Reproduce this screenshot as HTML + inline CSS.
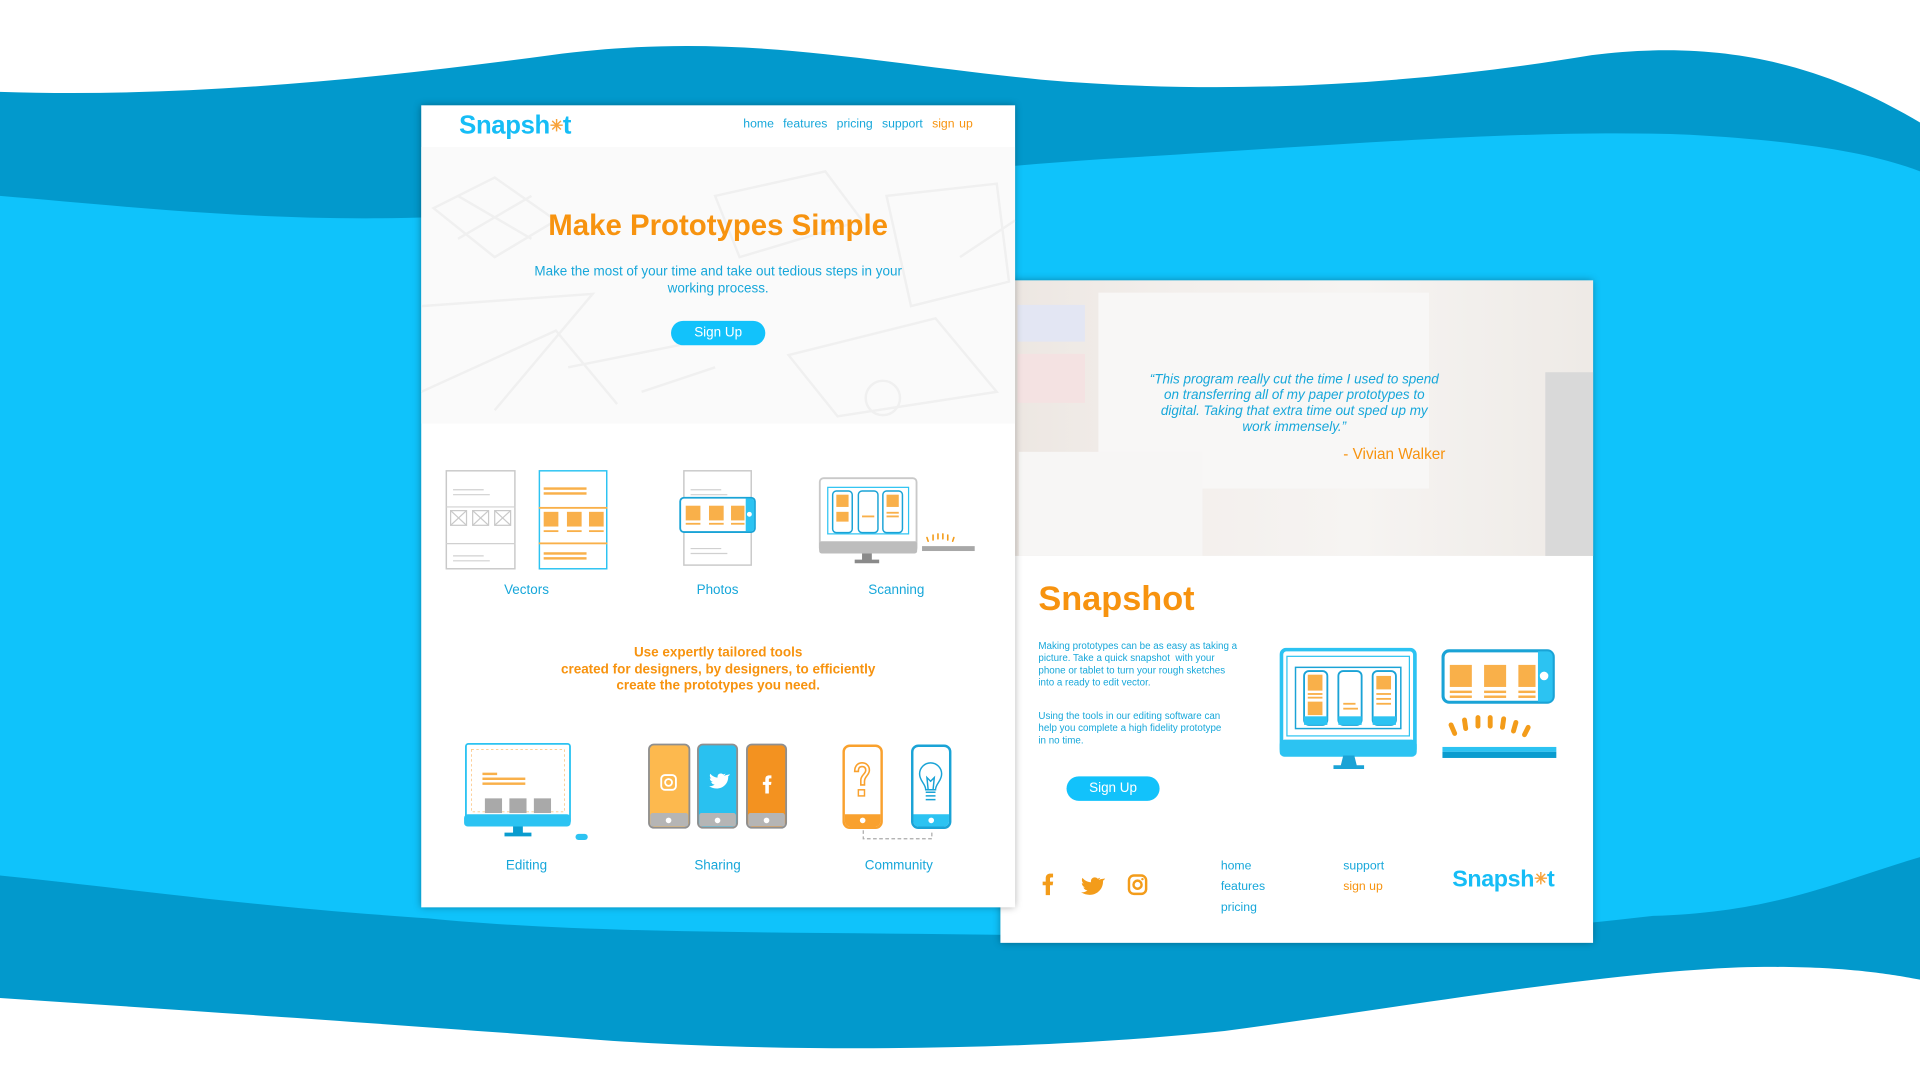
<!DOCTYPE html>
<html><head><meta charset="utf-8"><style>
*{margin:0;padding:0;box-sizing:border-box}
html,body{width:1920px;height:1080px;overflow:hidden;background:#fff}
#s{position:absolute;left:0;top:0;width:1568px;height:882px;transform:scale(1.22449);transform-origin:0 0;font-family:"Liberation Sans",sans-serif}
.a{position:absolute}
.pg{position:absolute;background:#fff;box-shadow:0 0 6px rgba(0,0,0,.35)}
.bl{color:#17a7da}.or{color:#f7930f}
.btn{position:absolute;background:#12c2fb;color:#fff;border-radius:10px;font-size:11px;text-align:center;line-height:20px}
.c{text-align:center}
.logo{position:absolute;font-weight:bold;color:#16bdf6;font-size:21px;letter-spacing:-.3px}
.logo i{font-style:normal;color:#f7a23a;font-size:13px;vertical-align:2px}
.nav{position:absolute;font-size:10px}
</style></head><body><div id="s">
<svg class="a" style="left:0;top:0" width="1568" height="882" viewBox="0 0 1568 882">
<path d="M0 75 C150 80 300 65 450 45 C600 25 700 50 850 65 C1000 78 1150 70 1300 45 C1420 30 1500 60 1568 100 L1568 882 L0 882Z" fill="#0299cc"/>
<path d="M0 160 C120 170 250 185 400 175 C600 160 750 140 900 130 C1100 118 1250 105 1380 110 C1470 115 1530 125 1568 140 L1568 700 C1500 720 1450 745 1350 748 C1200 765 1100 772 900 765 C700 760 500 765 350 750 C200 740 100 725 0 715Z" fill="#0fc3fb"/>
<path d="M0 815 C150 825 300 835 500 850 C650 860 850 858 1000 842 C1150 822 1300 795 1420 790 C1500 788 1540 795 1568 800 L1568 882 L0 882Z" fill="#fff"/>
</svg>

<!-- right page -->
<div class="pg" style="left:817px;top:229px;width:484px;height:541px">
 <div class="a" style="left:0;top:0;width:484px;height:225px;background:linear-gradient(90deg,#ece6e1,#f3efec 30%,#f6f4f2 60%,#eeeae6)"></div>
 <div class="a" style="left:14px;top:20px;width:55px;height:30px;background:#e3e6f3"></div>
 <div class="a" style="left:14px;top:60px;width:55px;height:40px;background:#f4e2e2"></div>
 <div class="a" style="left:80px;top:10px;width:270px;height:160px;background:#f8f7f6"></div>
 <div class="a" style="left:445px;top:75px;width:39px;height:150px;background:#d9d9d9"></div>
 <div class="a" style="left:15px;top:140px;width:150px;height:85px;background:#f7f6f5"></div>
 <div class="a bl c" style="left:120px;top:75px;width:240px;font-size:11px;font-style:italic;line-height:13px">“This program really cut the time I used to spend on transferring all of my paper prototypes to digital. Taking that extra time out sped up my work immensely.”</div>
 <div class="a or" style="left:280px;top:135px;font-size:12.5px">- Vivian Walker</div>
 <div class="a or" style="left:31px;top:244px;font-size:28px;font-weight:bold">Snapshot</div>
 <div class="a bl" style="left:31px;top:294px;width:165px;font-size:8px;line-height:10px">Making prototypes can be as easy as taking a picture. Take a quick snapshot &nbsp;with your phone or tablet to turn your rough sketches into a ready to edit vector.</div>
 <div class="a bl" style="left:31px;top:351px;width:155px;font-size:8px;line-height:10px">Using the tools in our editing software can help you complete a high fidelity prototype in no time.</div>
 <div class="btn" style="left:54px;top:405px;width:76px">Sign Up</div>
 <svg class="a" style="left:228px;top:300px" width="230" height="105" viewBox="0 0 230 105">
  <rect x="1.5" y="1.5" width="109" height="85" rx="4" fill="#fff" stroke="#2cc3f2" stroke-width="3"/>
  <rect x="0" y="75" width="112" height="14" rx="4" fill="#2cc3f2"/>
  <rect x="6" y="7" width="100" height="65" fill="none" stroke="#2cc3f2" stroke-width="1"/>
  <rect x="13" y="16" width="86" height="50" fill="none" stroke="#1aa3d6" stroke-width="1.2"/>
  <g fill="#fff" stroke="#1aa3d6" stroke-width="1.5"><rect x="20" y="19" width="19" height="44" rx="4"/><rect x="48" y="19" width="19" height="44" rx="4"/><rect x="76" y="19" width="19" height="44" rx="4"/></g>
  <g fill="#2cc3f2"><rect x="20" y="56" width="19" height="7"/><rect x="48" y="56" width="19" height="7"/><rect x="76" y="56" width="19" height="7"/></g>
  <g fill="#f9b04a"><rect x="23" y="22" width="12" height="13"/><rect x="23" y="44" width="12" height="11"/><rect x="79" y="23" width="12" height="11"/><rect x="23" y="37" width="12" height="1.5"/><rect x="23" y="40" width="12" height="1.5"/><rect x="52" y="45" width="10" height="1.5"/><rect x="52" y="49" width="12" height="1.5"/><rect x="79" y="37" width="12" height="1.5"/><rect x="79" y="41" width="12" height="1.5"/><rect x="79" y="45" width="12" height="1.5"/></g>
  <path d="M52 88 h9 l2 8 h6 v3 h-25 v-3 h6z" fill="#1aa3d6"/>
  <rect x="133.5" y="2.5" width="90" height="42" rx="5" fill="#fff" stroke="#1aa3d6" stroke-width="2.5"/>
  <path d="M211 3 h8 a4 4 0 0 1 4 4 v33 a4 4 0 0 1 -4 4 h-8z" fill="#2cc3f2"/>
  <circle cx="216" cy="23" r="3.5" fill="#fff"/>
  <g fill="#f9b04a"><rect x="139" y="14" width="18" height="18"/><rect x="167" y="14" width="18" height="18"/><rect x="195" y="14" width="14" height="18"/><rect x="139" y="35" width="18" height="2"/><rect x="167" y="35" width="18" height="2"/><rect x="195" y="35" width="14" height="2"/><rect x="139" y="39" width="18" height="2"/><rect x="167" y="39" width="18" height="2"/><rect x="195" y="39" width="14" height="2"/></g>
  <g stroke="#f39c1a" stroke-width="4" stroke-linecap="round"><path d="M143 70 l-3 -7"/><path d="M152 66 l-1 -7"/><path d="M162 64 v-7"/><path d="M172 64 v-7"/><path d="M182 65 l1 -7"/><path d="M191 68 l2 -7"/><path d="M200 71 l3 -6"/></g>
  <rect x="133" y="81" width="93" height="4" fill="#2cc3f2"/><rect x="133" y="85" width="93" height="5" fill="#0a9ccf"/>
 </svg>
 <svg class="a" style="left:30px;top:484px" width="95" height="20" viewBox="0 0 95 20">
  <path d="M7 18 v-8 h-2.5 v-3 h2.5 v-2.5 c0-3 1.5-4 4-4 h2 v3 h-1.5 c-1 0-1 .5-1 1.5 v2 h2.6 l-.4 3 h-2.2 v8z" fill="#f39c1a"/>
  <path d="M49 6 c-.6.3-1.3.5-2 .6 .7-.5 1.3-1.1 1.5-1.9 -.7.4-1.4.7-2.2.8 -1.4-1.5-4-1.2-5 .6 -.4.8-.5 1.6-.3 2.4 -2.8-.2-5.3-1.5-7-3.6 -.9 1.6-.4 3.6 1 4.6 -.5 0-1-.2-1.5-.4 0 1.7 1.2 3.2 2.8 3.5 -.5.1-1 .2-1.5.1 .5 1.4 1.8 2.4 3.3 2.4 -1.5 1.2-3.4 1.8-5.3 1.6 9 5.5 18.5-.5 18-9.5 .8-.5 1.3-1.1 1.7-1.8z" fill="#f39c1a" transform="translate(3,-1)"/>
  <rect x="75" y="2" width="14" height="15" rx="4" fill="none" stroke="#f39c1a" stroke-width="2"/>
  <circle cx="82" cy="9.5" r="3.3" fill="none" stroke="#f39c1a" stroke-width="2"/><circle cx="86" cy="5" r="1" fill="#f39c1a"/>
 </svg>
 <div class="a nav bl" style="left:180px;top:470px;line-height:17px">home<br>features<br>pricing</div>
 <div class="a nav" style="left:280px;top:470px;line-height:17px"><span class="bl">support</span><br><span class="or">sign up</span></div>
 <div class="logo" style="left:369px;top:479px;font-size:19px">Snapsh<i>✳</i>t</div>
</div>

<!-- left page -->
<div class="pg" style="left:344px;top:86px;width:485px;height:655px">
 <div class="logo" style="left:31px;top:5px">Snapsh<i>✳</i>t</div>
 <div class="nav" style="left:263px;top:10px;word-spacing:1px"><span class="bl">home &nbsp;features &nbsp;pricing &nbsp;support</span> &nbsp;<span class="or">sign up</span></div>
 <svg class="a" style="left:0;top:34px" width="485" height="226" viewBox="0 0 485 226">
  <rect width="485" height="226" fill="#fafafa"/>
  <g fill="none" stroke="#f0f0f0" stroke-width="2">
   <path d="M10 50 L60 25 L110 60 L60 90Z M30 40 L90 75 M30 75 L90 40"/>
   <path d="M0 200 L110 150 L160 210 M0 130 L140 120 L60 215"/>
   <path d="M240 40 L330 20 L360 60 L260 90Z M380 40 L470 30 L480 110 L400 130Z"/>
   <path d="M300 170 L420 140 L470 200 L340 220Z"/><circle cx="377" cy="205" r="14"/>
   <path d="M120 180 L220 160 M180 200 L240 180 M440 90 L485 60"/>
  </g>
 </svg>
 <div class="a or c" style="left:0;top:85px;width:485px;font-size:24px;font-weight:bold">Make Prototypes Simple</div>
 <div class="a bl c" style="left:90px;top:129px;width:305px;font-size:11px;line-height:14px">Make the most of your time and take out tedious steps in your working process.</div>
 <div class="btn" style="left:204px;top:176px;width:77px">Sign Up</div>
 <svg class="a" style="left:0;top:290px" width="485" height="120" viewBox="0 0 485 120">
  <g fill="#fff" stroke="#c9c9c9" stroke-width="1.2"><rect x="20.5" y="8.5" width="56" height="80"/><rect x="214.5" y="8.5" width="55" height="77"/></g>
  <g stroke="#d0d0d0" stroke-width="1"><path d="M26 24h25M26 28h30M20 38h57M20 68h57M26 78h25M26 82h30M220 24h25M220 28h30M220 72h25M220 76h30"/></g>
  <g fill="none" stroke="#c9c9c9" stroke-width="1"><rect x="24" y="41" width="13" height="12"/><rect x="42" y="41" width="13" height="12"/><rect x="60" y="41" width="13" height="12"/><path d="M24 41l13 12M37 41l-13 12M42 41l13 12M55 41l-13 12M60 41l13 12M73 41l-13 12"/></g>
  <rect x="96.5" y="8.5" width="55" height="80" fill="#fff" stroke="#2cc3f2" stroke-width="1.2"/>
  <g fill="#f9b04a"><rect x="100" y="22" width="35" height="2"/><rect x="100" y="26" width="35" height="2"/><rect x="96" y="38" width="56" height="1.5"/><rect x="100" y="42" width="12" height="12"/><rect x="119" y="42" width="12" height="12"/><rect x="137" y="42" width="12" height="12"/><rect x="100" y="57" width="12" height="1.5"/><rect x="119" y="57" width="12" height="1.5"/><rect x="137" y="57" width="12" height="1.5"/><rect x="96" y="67" width="56" height="1.5"/><rect x="100" y="75" width="35" height="2"/><rect x="100" y="79" width="35" height="2"/></g>
  <rect x="211.5" y="30.5" width="61" height="28" rx="3" fill="#fff" stroke="#1aa3d6" stroke-width="1.5"/>
  <path d="M265 31 h4 a3 3 0 0 1 3 3 v21 a3 3 0 0 1 -3 3 h-4z" fill="#2cc3f2"/><circle cx="268" cy="44" r="2" fill="#fff"/>
  <g fill="#f9b04a"><rect x="216" y="37" width="12" height="12"/><rect x="235" y="37" width="12" height="12"/><rect x="253" y="37" width="11" height="12"/><rect x="216" y="51" width="12" height="1.5"/><rect x="235" y="51" width="12" height="1.5"/><rect x="253" y="51" width="11" height="1.5"/></g>
  <rect x="325.5" y="14.5" width="79" height="60" rx="3" fill="#fff" stroke="#c9c9c9" stroke-width="1.5"/>
  <rect x="325" y="66" width="80" height="10" rx="2" fill="#bdbdbd"/>
  <path d="M360 76 h8 v5 h6 v3 h-20 v-3 h6z" fill="#8a8a8a"/>
  <rect x="332" y="22" width="66" height="38" fill="none" stroke="#2cc3f2" stroke-width="1"/>
  <g fill="#fff" stroke="#1aa3d6" stroke-width="1.2"><rect x="336" y="25" width="16" height="34" rx="3"/><rect x="357" y="25" width="16" height="34" rx="3"/><rect x="377" y="25" width="16" height="34" rx="3"/></g>
  <g fill="#f9b04a"><rect x="339" y="28" width="10" height="10"/><rect x="339" y="42" width="10" height="8"/><rect x="380" y="28" width="10" height="10"/><rect x="360" y="45" width="10" height="1.5"/><rect x="380" y="42" width="10" height="1.5"/><rect x="380" y="45" width="10" height="1.5"/></g>
  <g stroke="#f39c1a" stroke-width="1.3" stroke-linecap="round"><path d="M414 66l-1-3M418 65v-4M422 64v-4M426 64v-4M430 65v-4M434 66l1-3"/></g>
  <rect x="409" y="70" width="43" height="4" fill="#a8a8a8"/>
 </svg>
 <div class="a bl c" style="left:36px;top:390px;width:100px;font-size:11px">Vectors</div>
 <div class="a bl c" style="left:192px;top:390px;width:100px;font-size:11px">Photos</div>
 <div class="a bl c" style="left:338px;top:390px;width:100px;font-size:11px">Scanning</div>
 <div class="a or c" style="left:60px;top:441px;width:365px;font-size:11px;line-height:13.5px;font-weight:bold">Use expertly tailored tools<br>created for designers, by designers, to efficiently<br>create the prototypes you need.</div>
 <svg class="a" style="left:0;top:515px" width="485" height="95" viewBox="0 0 485 95">
  <rect x="36.5" y="6.5" width="85" height="65" rx="2" fill="#fff" stroke="#2cc3f2" stroke-width="1.5"/>
  <rect x="35" y="64" width="87" height="10" rx="3" fill="#2cc3f2"/>
  <path d="M75 74 h8 v5 h7 v3 h-22 v-3 h7z" fill="#0a9ccf"/>
  <rect x="126" y="80" width="10" height="5" rx="2.5" fill="#2cc3f2"/>
  <rect x="41" y="11" width="76" height="51" fill="none" stroke="#fbc98a" stroke-width=".7" stroke-dasharray="2 2"/>
  <g fill="#f9b04a"><rect x="50" y="30" width="12" height="2"/><rect x="50" y="34" width="35" height="2"/><rect x="50" y="38" width="35" height="2"/></g>
  <g fill="#a9a9a9"><rect x="52" y="51" width="14" height="12"/><rect x="72" y="51" width="14" height="12"/><rect x="92" y="51" width="14" height="12"/></g>
  <rect x="186" y="7" width="33" height="68" rx="4" fill="#fdb94e" stroke="#8f8f8f" stroke-width="1.5"/>
  <rect x="226" y="7" width="32" height="68" rx="4" fill="#29c1f0" stroke="#8f8f8f" stroke-width="1.5"/>
  <rect x="266" y="7" width="32" height="68" rx="4" fill="#f39220" stroke="#8f8f8f" stroke-width="1.5"/>
  <g fill="#b5b5b5"><rect x="187" y="63" width="31" height="11" rx="2"/><rect x="227" y="63" width="30" height="11" rx="2"/><rect x="267" y="63" width="30" height="11" rx="2"/></g>
  <g fill="#fff"><circle cx="202" cy="69" r="2.3"/><circle cx="242" cy="69" r="2.3"/><circle cx="282" cy="69" r="2.3"/></g>
  <rect x="196" y="32" width="12" height="12" rx="3" fill="none" stroke="#fff" stroke-width="1.5"/><circle cx="202" cy="38" r="2.8" fill="none" stroke="#fff" stroke-width="1.5"/>
  <path d="M249 32 c-.6.3-1.2.4-1.8.5 .6-.4 1.1-1 1.3-1.7 -.6.3-1.2.6-1.9.7 -1.2-1.3-3.5-1-4.3.5 -.3.7-.4 1.4-.2 2 -2.4-.1-4.6-1.3-6-3.1 -.8 1.4-.3 3.1.9 4 -.4 0-.9-.2-1.3-.4 0 1.5 1 2.8 2.4 3 -.4.1-.9.2-1.3.1 .4 1.2 1.6 2.1 2.9 2.1 -1.3 1-3 1.6-4.6 1.4 7.8 4.8 16-.4 15.6-8.2 .7-.4 1.1-1 1.5-1.6z" fill="#fff"/>
  <path d="M281 47 v-7 h-2 v-2.5 h2 v-2 c0-2.5 1.2-3.3 3.3-3.3 h1.7 v2.5 h-1.2 c-.8 0-.9.4-.9 1.2 v1.6 h2.1 l-.3 2.5 h-1.8 v7z" fill="#fff"/>
  <rect x="345" y="8" width="31" height="67" rx="5" fill="#fff" stroke="#f9a12e" stroke-width="2"/>
  <path d="M346 64 h29 v6 a4 4 0 0 1-4 4 h-21 a4 4 0 0 1-4-4z" fill="#f9a12e"/><circle cx="360.5" cy="69" r="2.3" fill="#fff"/>
  <path d="M354 29 c0-5 3-7 6-7 s6 2 6 6 c0 4-4 5-4 9 v3 h-3 v-4 c0-4 4-5 4-8 0-2-1-3-3-3 s-3 1-3 4z" fill="none" stroke="#f9a12e" stroke-width="1.3"/><rect x="357" y="44" width="5" height="5" fill="none" stroke="#f9a12e" stroke-width="1.2"/>
  <rect x="401" y="8" width="31" height="67" rx="5" fill="#fff" stroke="#1aa3d6" stroke-width="2"/>
  <path d="M402 64 h29 v6 a4 4 0 0 1-4 4 h-21 a4 4 0 0 1-4-4z" fill="#2cc3f2"/><circle cx="416.5" cy="69" r="2.3" fill="#fff"/>
  <path d="M412 44 c0-5-5-7-5-13 a9 9 0 0 1 18 0 c0 6-5 8-5 13z M412 46h8M412 49h8M412 52h8 M414 44l-1-10 3 3 3-3-1 10" fill="none" stroke="#1aa3d6" stroke-width="1.2"/>
  <path d="M361 77 v7 h56 v-7" fill="none" stroke="#aaa" stroke-width="1" stroke-dasharray="3 2"/>
 </svg>
 <div class="a bl c" style="left:36px;top:615px;width:100px;font-size:11px">Editing</div>
 <div class="a bl c" style="left:192px;top:615px;width:100px;font-size:11px">Sharing</div>
 <div class="a bl c" style="left:340px;top:615px;width:100px;font-size:11px">Community</div>
</div>
</div></body></html>
